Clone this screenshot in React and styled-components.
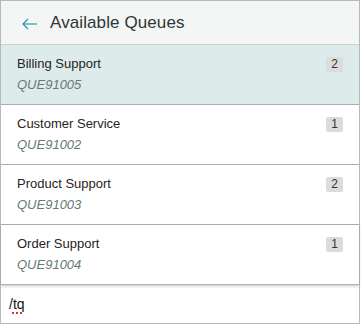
import React from 'react'
import styled, { createGlobalStyle } from 'styled-components'

const GlobalStyle = createGlobalStyle`
  body {
    margin: 0;
    background: #fff;
    font-family: "Liberation Sans", Arial, sans-serif;
  }
`

const queues = [
  { name: 'Billing Support', id: 'QUE91005', count: 2 },
  { name: 'Customer Service', id: 'QUE91002', count: 1 },
  { name: 'Product Support', id: 'QUE91003', count: 2 },
  { name: 'Order Support', id: 'QUE91004', count: 1 },
]

export default function App() {
  return (
    <>
      <GlobalStyle />
      <Panel>
        <Header>
          <BackButton aria-label="back">
            <svg width="15" height="12" viewBox="0 0 15 12" fill="none">
              <path d="M1 6 H15" stroke="#1f8ea0" strokeWidth="1.1" />
              <path d="M6 1 L1 6 L6 11" stroke="#1f8ea0" strokeWidth="1.1" />
            </svg>
          </BackButton>
          <Title>Available Queues</Title>
        </Header>
        <List>
          {queues.map((q, i) => (
            <Row key={q.id} $selected={i === 0} $last={i === queues.length - 1}>
              <Info>
                <Name>{q.name}</Name>
                <QueueId>{q.id}</QueueId>
              </Info>
              <Badge>{q.count}</Badge>
            </Row>
          ))}
        </List>
        <Composer>
          <span>/</span><Misspelled>tq</Misspelled>
        </Composer>
      </Panel>
    </>
  )
}

const Panel = styled.div`
  width: 360px;
  box-sizing: border-box;
  border: 1px solid #b3bbbb;
  border-bottom: none;
  display: flex;
  flex-direction: column;
`

const Header = styled.div`
  height: 43px;
  display: flex;
  align-items: center;
  gap: 13px;
  padding-left: 21px;
  background: #f4f6f6;
  border-bottom: 1px solid #c9d0d0;
`

const BackButton = styled.span`
  display: flex;
  align-items: center;
  padding-top: 2px;
`

const Title = styled.div`
  font-size: 17px;
  color: #2f3535;
  letter-spacing: 0.1px;
`

const List = styled.div`
  display: flex;
  flex-direction: column;
`

const Row = styled.div`
  display: flex;
  justify-content: space-between;
  align-items: flex-start;
  padding: 11px 16px 0 16px;
  height: 48px;
  background: ${p => (p.$selected ? '#ddecea' : '#fff')};
  border-bottom: 1px solid #a9b2b2;
  box-shadow: ${p => (p.$last ? '0 1px 3px rgba(0,0,0,0.22)' : 'none')};
  position: relative;
`

const Info = styled.div`
  display: flex;
  flex-direction: column;
  gap: 6px;
`

const Name = styled.div`
  font-size: 13px;
  color: #1f2424;
  line-height: 15px;
`

const QueueId = styled.div`
  font-size: 13px;
  font-style: italic;
  color: #66797a;
  line-height: 15px;
`

const Badge = styled.span`
  min-width: 15px;
  height: 15px;
  margin-top: 1px;
  padding: 0 1px;
  border-radius: 2px;
  background: #dcdcdc;
  color: #333;
  font-size: 12px;
  line-height: 15px;
  text-align: center;
`

const Composer = styled.div`
  height: 38px;
  display: flex;
  align-items: center;
  padding-left: 8px;
  border-bottom: 1px solid #b3bbbb;
  font-size: 14px;
  color: #111;
`

const Misspelled = styled.span`
  text-decoration: underline dotted #e0302a;
  text-decoration-thickness: 2px;
  text-underline-offset: 3px;
`
